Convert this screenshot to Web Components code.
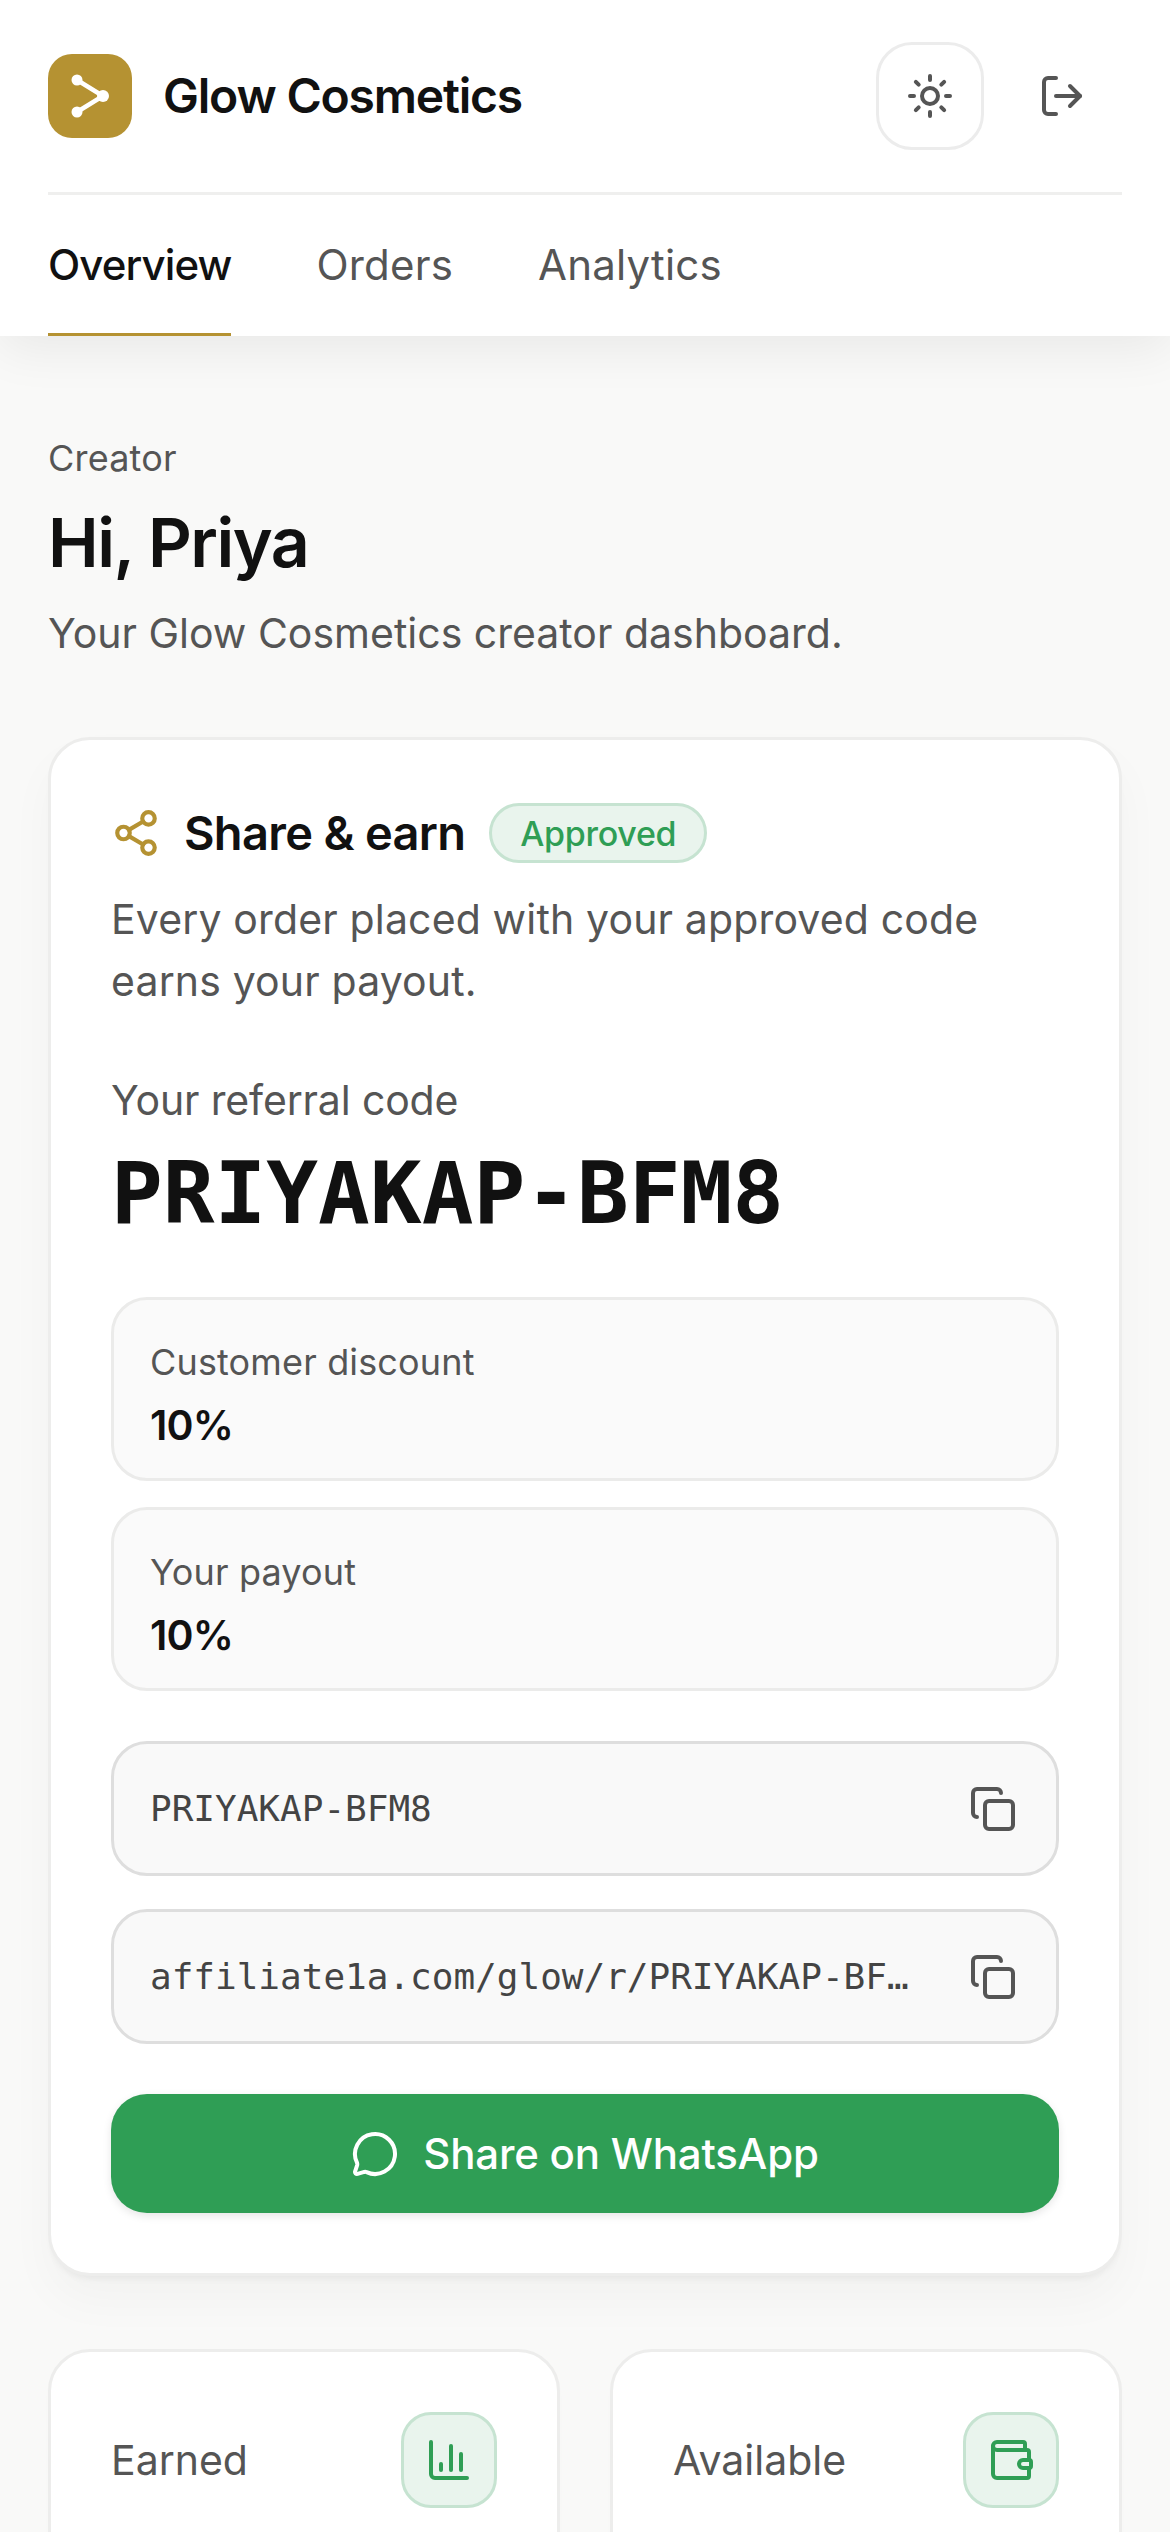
<!DOCTYPE html>
<html lang="en">
<head>
<meta charset="utf-8">
<title>Glow Cosmetics</title>
<style>
  html, body { margin: 0; height: 2532px; overflow: hidden; background: #f9f9f8; }
  body { font-family: "Inter", "Noto Sans", sans-serif; color: #111; }
  main { display: block; padding: 95px 48px 0; }
</style>
</head>
<body>
<app-header title-text="Glow Cosmetics" tabs="Overview,Orders,Analytics"></app-header>
<main>
  <page-intro eyebrow="Creator" heading="Hi, Priya" sub="Your Glow Cosmetics creator dashboard."></page-intro>
  <share-card>
    <rate-box slot="rates" label="Customer discount" value="10%"></rate-box>
    <rate-box slot="rates" label="Your payout" value="10%"></rate-box>
    <copy-field slot="fields" value="PRIYAKAP-BFM8"></copy-field>
    <copy-field slot="fields" value="affiliate1a.com/glow/r/PRIYAKAP-BFM8"></copy-field>
  </share-card>
  <tile-grid>
    <stat-tile label="Earned" icon="chart"></stat-tile>
    <stat-tile label="Available" icon="wallet"></stat-tile>
  </tile-grid>
</main>

<script>
const ICONS = {
  sun: `<circle cx="12" cy="12" r="4"/><path d="M12 2v2M12 20v2M4.93 4.93l1.41 1.41M17.66 17.66l1.41 1.41M2 12h2M20 12h2M6.34 17.66l-1.41 1.41M19.07 4.93l-1.41 1.41"/>`,
  logout: `<path d="M9 21H5a2 2 0 0 1-2-2V5a2 2 0 0 1 2-2h4"/><path d="M16 17l5-5-5-5"/><path d="M21 12H9"/>`,
  share: `<circle cx="18" cy="5" r="3"/><circle cx="6" cy="12" r="3"/><circle cx="18" cy="19" r="3"/><path d="M8.59 13.51l6.83 3.98M15.41 6.51l-6.82 3.98"/>`,
  copy: `<rect x="8" y="8" width="14" height="14" rx="2"/><path d="M4 16c-1.1 0-2-.9-2-2V4c0-1.1.9-2 2-2h10c1.1 0 2 .9 2 2"/>`,
  message: `<path d="M2.992 16.342a2 2 0 0 1 .094 1.167l-1.065 3.29a1 1 0 0 0 1.236 1.168l3.413-.998a2 2 0 0 1 1.099.092 10 10 0 1 0-4.777-4.719"/>`,
  chart: `<path d="M3 3v16a2 2 0 0 0 2 2h16"/><path d="M18 17V9"/><path d="M13 17V5"/><path d="M8 17v-3"/>`,
  wallet: `<path d="M19 7V4a1 1 0 0 0-1-1H5a2 2 0 0 0 0 4h15a1 1 0 0 1 1 1v4h-3a2 2 0 0 0 0 4h3a1 1 0 0 0 1-1v-2a1 1 0 0 0-1-1"/><path d="M3 5v14a2 2 0 0 0 2 2h15a1 1 0 0 0 1-1v-4"/>`,
};

class GlowIcon extends HTMLElement {
  connectedCallback() {
    const size = this.getAttribute("size") || 48;
    const root = this.shadowRoot || this.attachShadow({ mode: "open" });
    root.innerHTML = `
      <style>:host{ display:inline-flex; flex:none; line-height:0; }</style>
      <svg width="${size}" height="${size}" viewBox="0 0 24 24" fill="none" stroke="currentColor"
        stroke-width="2" stroke-linecap="round" stroke-linejoin="round">${ICONS[this.getAttribute("name")] || ""}</svg>`;
  }
}
customElements.define("glow-icon", GlowIcon);

const headerTpl = document.createElement("template");
headerTpl.innerHTML = `
  <style>
    :host{ display:block; background:#fff; padding:42px 48px 0; box-shadow:0 12px 48px rgba(0,0,0,0.07); position:relative; }
    .top{ display:flex; align-items:center; height:108px; padding-bottom:42px; border-bottom:3px solid #efefee; }
    .logo{ width:84px; height:84px; border-radius:24px; background:#b59232; flex:none; }
    .logo svg{ display:block; }
    h1{ margin:0 0 0 31px; flex:1; font-size:48px; font-weight:600; line-height:60px; letter-spacing:-1.2px; color:#111; }
    .btn{ width:108px; height:108px; box-sizing:border-box; border-radius:36px; display:flex; align-items:center; justify-content:center; color:#555; }
    .sun{ border:3px solid #ececec; margin-right:24px; }
    .out{ margin-right:6px; }
    nav{ display:flex; gap:85px; height:141px; }
    a{ display:flex; align-items:center; height:138px; font-size:42px; font-weight:400; color:#555; border-bottom:3px solid transparent; letter-spacing:.2px; }
    a.on{ color:#111; font-weight:500; letter-spacing:-.9px; border-bottom-color:#b59232; }
  </style>
  <div class="top">
    <div class="logo">
      <svg width="84" height="84" viewBox="0 0 84 84" fill="#fff" stroke="#fff" stroke-width="4.5">
        <path d="M29 26L55 42L29 58" fill="none"/>
        <circle cx="29" cy="26" r="5.5" stroke="none"/><circle cx="29" cy="58" r="5.5" stroke="none"/><circle cx="55" cy="42" r="6" stroke="none"/>
      </svg>
    </div>
    <h1></h1>
    <div class="btn sun"><glow-icon name="sun"></glow-icon></div>
    <div class="btn out"><glow-icon name="logout"></glow-icon></div>
  </div>
  <nav></nav>
`;
class AppHeader extends HTMLElement {
  constructor() {
    super();
    this.attachShadow({ mode: "open" });
    this.shadowRoot.appendChild(headerTpl.content.cloneNode(true));
  }
  connectedCallback() {
    this.shadowRoot.querySelector("h1").textContent = this.getAttribute("title-text");
    const nav = this.shadowRoot.querySelector("nav");
    this.getAttribute("tabs").split(",").forEach((t, i) => {
      const a = document.createElement("a");
      a.textContent = t;
      if (i === 0) a.className = "on";
      nav.appendChild(a);
    });
  }
}
customElements.define("app-header", AppHeader);

class PageIntro extends HTMLElement {
  connectedCallback() {
    const root = this.shadowRoot || this.attachShadow({ mode: "open" });
    root.innerHTML = `
      <style>
        :host{ display:block; }
        .eyebrow{ font-size:36px; line-height:54px; font-weight:400; color:#555; letter-spacing:.2px; }
        h2{ margin:15px 0 18px; font-size:68px; line-height:84px; font-weight:600; color:#111; letter-spacing:-1.5px; }
        p{ margin:0; font-size:41px; line-height:63px; color:#555; }
      </style>
      <div class="eyebrow">${this.getAttribute("eyebrow")}</div>
      <h2>${this.getAttribute("heading")}</h2>
      <p>${this.getAttribute("sub")}</p>`;
  }
}
customElements.define("page-intro", PageIntro);

const shareTpl = document.createElement("template");
shareTpl.innerHTML = `
  <style>
    :host{ display:block; margin-top:72px; box-sizing:border-box; background:#fff; border:3px solid #ededec; border-radius:42px; padding:60px; box-shadow:0 6px 6px -3px rgba(0,0,0,0.05), 0 24px 48px rgba(0,0,0,0.03); }
    .head{ display:flex; align-items:center; height:66px; }
    .head glow-icon{ color:#b59232; margin-right:23px; }
    h3{ margin:0; font-size:47px; line-height:60px; font-weight:600; letter-spacing:-.7px; color:#111; }
    .pill{ margin-left:24px; height:60px; box-sizing:border-box; padding:0 28px; display:flex; align-items:center; border:3px solid #c6e3d1; background:#e9f4ed; border-radius:30px; color:#2f9e55; font-size:34px; font-weight:500; letter-spacing:-.3px; }
    p{ margin:22px 0 0; font-size:41px; line-height:62px; color:#555; letter-spacing:.15px; }
    .ref{ margin-top:61px; font-size:41px; line-height:54px; color:#555; letter-spacing:-.15px; }
    .code{ margin-top:18px; font-family:"DejaVu Sans Mono", "Liberation Mono", monospace; font-weight:700; font-size:86px; line-height:96px; color:#111; }
    .rates{ margin-top:56px; display:flex; flex-direction:column; gap:26px; }
    .fields{ margin-top:50px; display:flex; flex-direction:column; gap:33px; }
    button{ margin-top:50px; width:100%; height:119px; border:0; border-radius:36px; background:#2f9e55; color:#fff; display:flex; align-items:center; justify-content:center; gap:24px; font:500 42px "Inter", "Noto Sans", sans-serif; letter-spacing:-.2px; box-shadow:0 3px 9px rgba(0,0,0,0.1); }
  </style>
  <div class="head">
    <glow-icon name="share" size="50"></glow-icon>
    <h3>Share &amp; earn</h3>
    <span class="pill">Approved</span>
  </div>
  <p>Every order placed with your approved code earns your payout.</p>
  <div class="ref">Your referral code</div>
  <div class="code">PRIYAKAP-BFM8</div>
  <div class="rates"><slot name="rates"></slot></div>
  <div class="fields"><slot name="fields"></slot></div>
  <button><glow-icon name="message" size="48"></glow-icon>Share on WhatsApp</button>
`;
class ShareCard extends HTMLElement {
  constructor() {
    super();
    this.attachShadow({ mode: "open" });
    this.shadowRoot.appendChild(shareTpl.content.cloneNode(true));
  }
}
customElements.define("share-card", ShareCard);

class RateBox extends HTMLElement {
  connectedCallback() {
    const root = this.shadowRoot || this.attachShadow({ mode: "open" });
    root.innerHTML = `
      <style>
        :host{ display:block; box-sizing:border-box; height:184px; padding:35px 36px 0; background:#fafafa; border:3px solid #ebebea; border-radius:36px; }
        .l{ font-size:36px; line-height:54px; color:#555; font-weight:400; letter-spacing:.15px; }
        .v{ margin-top:9px; font-size:41px; line-height:54px; font-weight:600; color:#111; letter-spacing:-.8px; }
      </style>
      <div class="l">${this.getAttribute("label")}</div>
      <div class="v">${this.getAttribute("value")}</div>`;
  }
}
customElements.define("rate-box", RateBox);

class CopyField extends HTMLElement {
  connectedCallback() {
    const root = this.shadowRoot || this.attachShadow({ mode: "open" });
    root.innerHTML = `
      <style>
        :host{ display:flex; align-items:center; box-sizing:border-box; height:135px; padding:0 39px 0 36px; background:#f9f9f9; border:3px solid #dedede; border-radius:36px; color:#555; }
        span{ flex:1; min-width:0; margin-right:57px; white-space:nowrap; overflow:hidden; text-overflow:ellipsis; font-family:"DejaVu Sans Mono", "Liberation Mono", monospace; font-size:36px; line-height:54px; color:#444; }
      </style>
      <span>${this.getAttribute("value")}</span>
      <glow-icon name="copy" size="48"></glow-icon>`;
  }
}
customElements.define("copy-field", CopyField);

class TileGrid extends HTMLElement {
  constructor() {
    super();
    this.attachShadow({ mode: "open" }).innerHTML = `
      <style>:host{ display:grid; grid-template-columns:1fr 1fr; gap:50px; margin-top:73px; }</style>
      <slot></slot>`;
  }
}
customElements.define("tile-grid", TileGrid);

class StatTile extends HTMLElement {
  connectedCallback() {
    const root = this.shadowRoot || this.attachShadow({ mode: "open" });
    root.innerHTML = `
      <style>
        :host{ display:flex; align-items:flex-start; justify-content:space-between; box-sizing:border-box; height:300px; padding:60px; background:#fff; border:3px solid #ededec; border-radius:42px; box-shadow:0 6px 6px -3px rgba(0,0,0,0.05); }
        span{ font-size:41px; line-height:96px; color:#555; }
        .ic{ width:96px; height:96px; box-sizing:border-box; display:flex; align-items:center; justify-content:center; background:#e9f4ed; border:3px solid #c6e3d1; border-radius:30px; color:#2f9e55; }
      </style>
      <span>${this.getAttribute("label")}</span>
      <div class="ic"><glow-icon name="${this.getAttribute("icon")}" size="48"></glow-icon></div>`;
  }
}
customElements.define("stat-tile", StatTile);
</script>
</body>
</html>
